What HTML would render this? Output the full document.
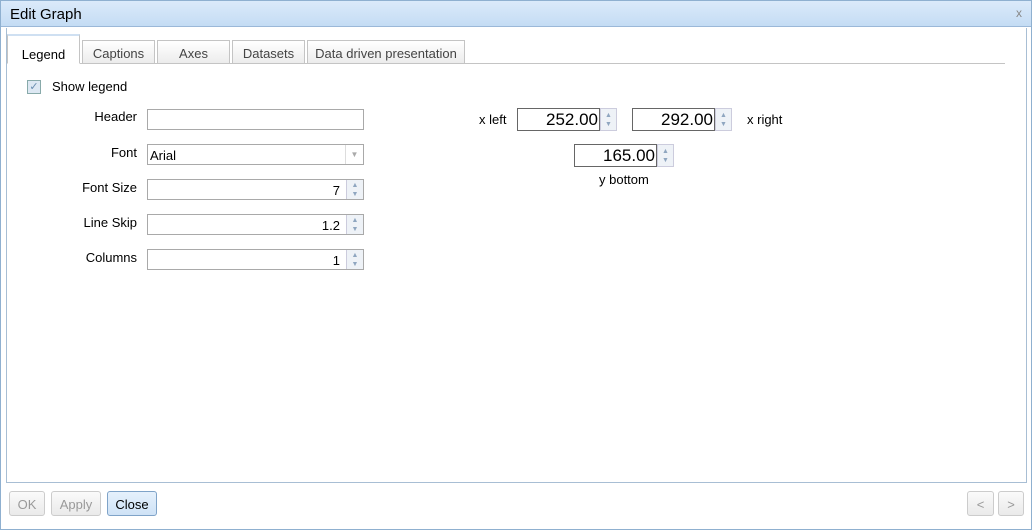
<!DOCTYPE html><html><head><style>
*{box-sizing:border-box}body{margin:0;width:1032px;height:530px;background:#fff;font-family:"Liberation Sans",sans-serif;font-size:13px;position:relative;overflow:hidden;color:#000}
.a{position:absolute}
.frame{left:0;top:0;width:1032px;height:530px;border:1px solid #8fb0d0}
.title{left:1px;top:1px;width:1030px;height:26px;background:linear-gradient(#dbeafa,#c4dcf4);border-bottom:1px solid #9bb8d8;font-size:15px;padding:5px 9px}
.panel{left:6px;top:28px;width:1021px;height:455px;border:1px solid #a8bed4;border-top:none}
.tab{top:40px;height:24px;border:1px solid #c4c4c4;background:linear-gradient(#fff,#ececec);text-align:center;padding-top:5px;color:#444;font-size:13px}
.inp{border:1px solid #a9a9a9;height:21px;background:#fff}
.lbl{text-align:right;width:100px;font-size:13px}
.sp{width:17px;border-left:1px solid #ccd;background:#eef2f7;color:#8fa6c0;font-size:7px;line-height:9px;text-align:center;padding-top:1px}
.btn{top:491px;height:25px;border:1px solid #ccc;border-radius:3px;background:linear-gradient(#fafafa,#eaeaea);color:#999;text-align:center;padding-top:5px}
</style></head><body>
<div class="a frame"></div>
<div class="a title">Edit Graph</div>
<div class="a" style="right:10px;top:6px;color:#888;font-size:12px">x</div>
<div class="a panel"></div>
<div class="a" style="left:7px;top:63px;width:998px;height:1px;background:#c4c4c4"></div>
<div class="a tab" style="left:7px;top:34px;height:30px;width:73px;border-bottom:1px solid #fff;background:#fff;color:#000;padding-top:11px;border-top:2px solid #cfe0f2">Legend</div>
<div class="a tab" style="left:82px;width:73px">Captions</div>
<div class="a tab" style="left:157px;width:73px">Axes</div>
<div class="a tab" style="left:232px;width:73px">Datasets</div>
<div class="a tab" style="left:307px;width:158px">Data driven presentation</div>
<div class="a" style="left:27px;top:80px;width:14px;height:14px;border:1px solid #8aa;background:#dde8f3;color:#6a8db0;font-size:11px;text-align:center;line-height:12px">✓</div>
<div class="a" style="left:52px;top:79px">Show legend</div>
<div class="a lbl" style="left:37px;top:109px">Header</div>
<div class="a inp" style="left:147px;top:109px;width:217px"></div>
<div class="a lbl" style="left:37px;top:145px">Font</div>
<div class="a inp" style="left:147px;top:144px;width:217px;padding:3px 2px">Arial<span style="position:absolute;right:0;top:0;width:18px;height:19px;border-left:1px solid #ddd;color:#aaa;font-size:8px;text-align:center;line-height:19px">▼</span></div>
<div class="a lbl" style="left:37px;top:180px">Font Size</div>
<div class="a inp" style="left:147px;top:179px;width:217px;text-align:right;padding:3px 23px">7<span class="a sp" style="right:0;top:0;height:19px">▲<br>▼</span></div>
<div class="a lbl" style="left:37px;top:215px">Line Skip</div>
<div class="a inp" style="left:147px;top:214px;width:217px;text-align:right;padding:3px 23px">1.2<span class="a sp" style="right:0;top:0;height:19px">▲<br>▼</span></div>
<div class="a lbl" style="left:37px;top:250px">Columns</div>
<div class="a inp" style="left:147px;top:249px;width:217px;text-align:right;padding:3px 23px">1<span class="a sp" style="right:0;top:0;height:19px">▲<br>▼</span></div>
<div class="a" style="left:479px;top:112px">x left</div>
<div class="a inp" style="left:517px;top:108px;width:83px;height:23px;border-color:#666;font-size:17px;text-align:right;padding:1px 1px">252.00</div>
<div class="a sp" style="left:600px;top:108px;height:23px;border:1px solid #ccd;padding-top:2px">▲<br>▼</div>
<div class="a inp" style="left:632px;top:108px;width:83px;height:23px;border-color:#666;font-size:17px;text-align:right;padding:1px 1px">292.00</div>
<div class="a sp" style="left:715px;top:108px;height:23px;border:1px solid #ccd;padding-top:2px">▲<br>▼</div>
<div class="a" style="left:747px;top:112px">x right</div>
<div class="a inp" style="left:574px;top:144px;width:83px;height:23px;border-color:#666;font-size:17px;text-align:right;padding:1px 1px">165.00</div>
<div class="a sp" style="left:657px;top:144px;height:23px;border:1px solid #ccd;padding-top:2px">▲<br>▼</div>
<div class="a" style="left:599px;top:172px">y bottom</div>
<div class="a btn" style="left:9px;width:36px">OK</div>
<div class="a btn" style="left:51px;width:50px">Apply</div>
<div class="a btn" style="left:107px;width:50px;color:#000;border-color:#7fa3c8;background:linear-gradient(#e6f1fc,#cfe2f6)">Close</div>
<div class="a btn" style="left:967px;width:27px">&lt;</div>
<div class="a btn" style="left:998px;width:26px">&gt;</div>
</body></html>
